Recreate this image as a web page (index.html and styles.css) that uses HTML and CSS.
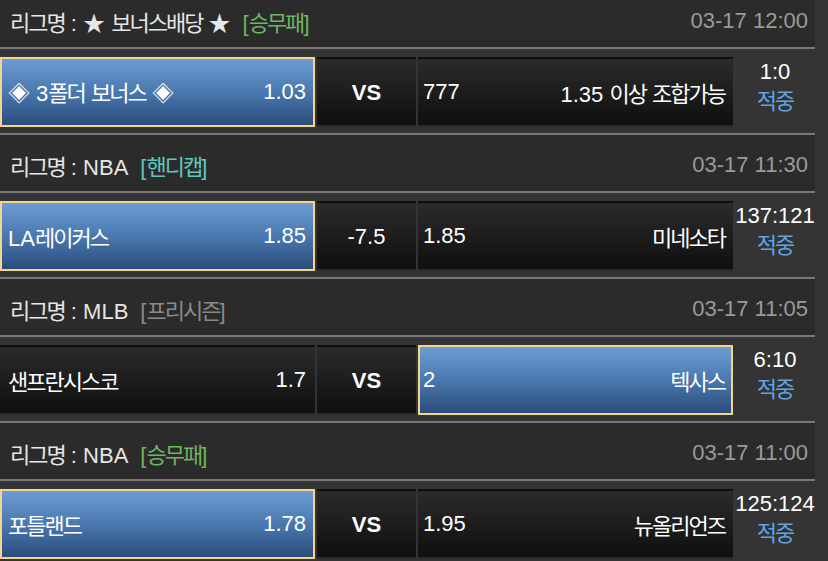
FILE: index.html
```html
<!DOCTYPE html>
<html lang="ko">
<head>
<meta charset="utf-8">
<title>경기 목록</title>
<link rel="stylesheet" href="styles.css">
</head>
<body>
<div class="list">
  <section class="game">
    <header class="league">
      <div class="league-name"><span class="ko">리그명</span> : ★ <span class="ko">보너스배당</span> ★<span class="tag tag-green">[<span class="ko">승무패</span>]</span></div>
      <div class="time">03-17 12:00</div>
    </header>
    <div class="match">
      <div class="cell team home selected"><span class="name">◈ 3<span class="ko">폴더</span> <span class="ko">보너스</span> ◈</span><span class="odds">1.03</span></div>
      <div class="cell mid vs">VS</div>
      <div class="cell team away"><span class="odds">777</span><span class="name">1.35 <span class="ko">이상</span> <span class="ko">조합가능</span></span></div>
      <div class="result"><span class="score">1:0</span><span class="hit ko">적중</span></div>
    </div>
  </section>

  <section class="game">
    <header class="league">
      <div class="league-name"><span class="ko">리그명</span> : NBA<span class="tag tag-teal">[<span class="ko">핸디캡</span>]</span></div>
      <div class="time">03-17 11:30</div>
    </header>
    <div class="match">
      <div class="cell team home selected"><span class="name">LA<span class="ko">레이커스</span></span><span class="odds">1.85</span></div>
      <div class="cell mid">-7.5</div>
      <div class="cell team away"><span class="odds">1.85</span><span class="name ko">미네소타</span></div>
      <div class="result"><span class="score">137:121</span><span class="hit ko">적중</span></div>
    </div>
  </section>

  <section class="game">
    <header class="league">
      <div class="league-name"><span class="ko">리그명</span> : MLB<span class="tag tag-gray">[<span class="ko">프리시즌</span>]</span></div>
      <div class="time">03-17 11:05</div>
    </header>
    <div class="match">
      <div class="cell team home"><span class="name ko">샌프란시스코</span><span class="odds">1.7</span></div>
      <div class="cell mid vs">VS</div>
      <div class="cell team away selected"><span class="odds">2</span><span class="name ko">텍사스</span></div>
      <div class="result"><span class="score">6:10</span><span class="hit ko">적중</span></div>
    </div>
  </section>

  <section class="game">
    <header class="league">
      <div class="league-name"><span class="ko">리그명</span> : NBA<span class="tag tag-green">[<span class="ko">승무패</span>]</span></div>
      <div class="time">03-17 11:00</div>
    </header>
    <div class="match">
      <div class="cell team home selected"><span class="name ko">포틀랜드</span><span class="odds">1.78</span></div>
      <div class="cell mid vs">VS</div>
      <div class="cell team away"><span class="odds">1.95</span><span class="name ko">뉴올리언즈</span></div>
      <div class="result"><span class="score">125:124</span><span class="hit ko">적중</span></div>
    </div>
  </section>
</div>
</body>
</html>
```

FILE: styles.css
```css
html, body {
  margin: 0;
  padding: 0;
  background: #343434;
  height: 100%;
  overflow: hidden;
}

body {
  font-family: "Liberation Sans", "Noto Sans CJK KR", sans-serif;
  font-size: 22px;
  color: #ffffff;
}

.list {
  width: 815px;
  margin-top: -11px;
}

.game {
  display: flex;
  flex-direction: column;
}

.league {
  background: #2b2b2b;
  border-top: 2px solid #787878;
  border-bottom: 2px solid #787878;
  display: flex;
  align-items: center;
  justify-content: space-between;
  padding: 3px 7px 0 10px;
  box-sizing: border-box;
  height: 60px;
  color: #e6e6e6;
}

.league-name {
  white-space: nowrap;
}

.ko {
  font-size: 22px;
  letter-spacing: -2px;
}

.tag {
  margin-left: 12px;
}

.tag-green { color: #6fb462; }
.tag-teal { color: #5fc7c2; }
.tag-gray { color: #8a8a8a; }

.time {
  color: #9a9a9a;
}

.match {
  display: grid;
  grid-template-columns: 315px 99px 315px 80px;
  grid-template-rows: 70px;
  column-gap: 2px;
  padding: 8px 0 6px;
  background: #343434;
}

.cell {
  background: linear-gradient(to bottom, #2b2b2b 0%, #0f0f0f 100%);
  border: 2px solid transparent;
  box-sizing: border-box;
  display: flex;
  align-items: center;
  white-space: nowrap;
}

.team {
  justify-content: space-between;
}

.home {
  padding: 0 7px 0 6px;
}

.away {
  padding: 0 6px 0 3px;
}

.selected {
  background: linear-gradient(to bottom, #6a9dd4 0%, #4a78ae 50%, #2b4d7c 100%);
  border-color: #f3d68c;
}

.mid {
  justify-content: center;
  padding-top: 2px;
}

.vs {
  font-weight: bold;
}

.result {
  display: flex;
  flex-direction: column;
  align-items: center;
  line-height: 30px;
  white-space: nowrap;
}

.hit {
  color: #62a3e2;
}
```
